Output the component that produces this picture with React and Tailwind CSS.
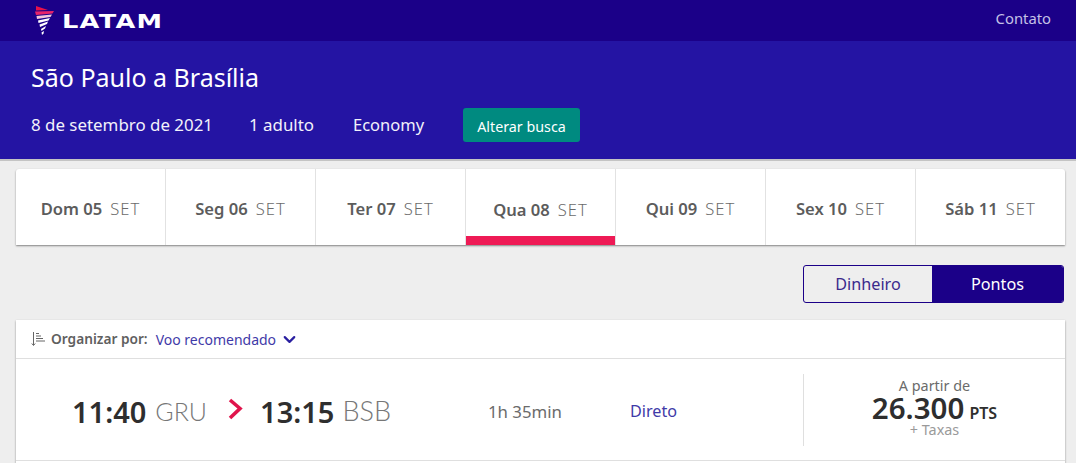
import React from "react";
import { ChevronDown } from "lucide-react";

const days = [
  { day: "Dom 05" },
  { day: "Seg 06" },
  { day: "Ter 07" },
  { day: "Qua 08", active: true },
  { day: "Qui 09" },
  { day: "Sex 10" },
  { day: "Sáb 11" },
];

const Logo = () => (
  <svg width="20" height="29" viewBox="0 0 20 29" className="shrink-0">
    <path d="M1 0 L13 4 L1 4.5 Z" fill="#e8114b" />
    <path d="M0 5.5 L19 5 L17.5 7.5 L1 9 Z" fill="#e8236a" />
    <path d="M1.5 10 L17 8.5 L15.5 11 L2 13 Z" fill="#f3c6dc" />
    <path d="M3 14.5 L15 12 L13.5 14.5 L3.5 17 Z" fill="#fff" />
    <path d="M4.5 18.5 L13 15.5 L12 18 L5 21 Z" fill="#fff" />
    <path d="M6 23 L11 20 L10 22.5 L6.5 25 Z" fill="#fff" />
    <path d="M6.5 26.5 L9 25 L8.5 27.5 L7 29 Z" fill="#fff" />
  </svg>
);

const SortIcon = () => (
  <svg width="15" height="16" viewBox="0 0 15 16" fill="none" stroke="#666" strokeWidth="1">
    <path d="M2.5 1 V14" />
    <path d="M0.8 12.5 L2.5 14.5 L4.2 12.5" />
    <path d="M5 2.5 H8 M5 5 H10 M5 7.5 H12 M5 10 H14" />
  </svg>
);

export default function App() {
  return (
    <div className="h-[463px] overflow-hidden bg-[#eeeeee] font-['Noto_Sans',sans-serif]">
      {/* Topo */}
      <div className="h-[41px] bg-[#1b0088] flex items-center justify-between pl-[35px] pr-[25px]">
        <div className="flex items-center gap-[7px]">
          <Logo />
          <span className="font-['DejaVu_Sans',sans-serif] font-bold text-[20px] leading-none tracking-[1px] text-white origin-left scale-x-[1.28]">
            LATAM
          </span>
        </div>
        <span className="text-[14.8px] text-[#c5c0e6] -mt-[5px]">Contato</span>
      </div>

      {/* Busca */}
      <div className="h-[118px] bg-[#2414a3] pl-[31px] pt-[19px]">
        <h1 className="text-[25px] leading-[34px] text-white">São Paulo a Brasília</h1>
        <div className="flex items-center mt-[14px] text-[16.9px] text-[#f2f1fa]">
          <span className="w-[218px]">8 de setembro de 2021</span>
          <span className="w-[104px]">1 adulto</span>
          <span className="w-[110px] text-[16.5px]">Economy</span>
          <button className="h-[34px] w-[117px] rounded-[3px] bg-[#008a80] text-[14.3px] text-white pt-[3px]">
            Alterar busca
          </button>
        </div>
      </div>
      <div className="h-[2px] bg-[#c4c4c4]" />

      <div className="pl-[16px] pt-[8px]">
        {/* Dias */}
        <div className="h-[76px] w-[1049px] flex bg-white rounded-t-[3px] shadow-[0_1px_2px_rgba(0,0,0,0.45)]">
          {days.map((d) => (
            <div
              key={d.day}
              className={`relative w-[150px] shrink-0 last:w-[149px] flex items-center justify-center gap-[8px] text-[#5c5c5c] border-r border-[#e2e2e2] last:border-r-0 ${
                d.active ? "pt-[6px]" : "pt-[4px]"
              }`}
            >
              <span className="font-semibold text-[16.6px]">{d.day}</span>
              <span className="text-[16.6px] font-light tracking-[1px] text-[#6b6b6b]">SET</span>
              {d.active && <div className="absolute left-0 right-0 bottom-0 h-[9px] bg-[#ee1a55]" />}
            </div>
          ))}
        </div>

        {/* Dinheiro / Pontos */}
        <div className="flex justify-end mt-[20px] w-[1048px]">
          <div className="flex h-[38px] w-[261px] rounded-[3px] border border-[#1b0088] text-[16.2px] overflow-hidden">
            <div className="w-[128px] flex items-center justify-center text-[#3a2a8c]">Dinheiro</div>
            <div className="flex-1 flex items-center justify-center bg-[#1b0088] text-white">Pontos</div>
          </div>
        </div>

        {/* Voos */}
        <div className="mt-[17px] w-[1049px] h-[200px] bg-white shadow-[0_1px_2px_rgba(0,0,0,0.4)]">
          <div className="h-[39px] flex items-center pl-[15px] border-b border-[#dfdfdf]">
            <SortIcon />
            <span className="ml-[5px] font-semibold text-[13.7px] text-[#5f5f5f]">Organizar por:</span>
            <span className="ml-[8px] text-[14px] text-[#3f3aa8]">Voo recomendado</span>
            <ChevronDown size={19} strokeWidth={2.75} className="ml-[4px] text-[#2a1fa0]" />
          </div>

          <div className="h-[102px] flex items-center border-b border-[#dfdfdf]">
            <div className="flex items-center w-[787px] pl-[56px] pt-[4px]">
              <div className="flex items-center w-[416px]">
                <span className="font-semibold text-[29px] text-[#2e2e2e]">11:40</span>
                <span className="ml-[9px] text-[25px] font-['Lato',sans-serif] font-light text-[#777]">GRU</span>
                <svg width="18" height="24" viewBox="0 0 18 24" fill="none" stroke="#e0144c" strokeWidth="3.6" className="ml-[20px] -mt-[6px]">
                  <path d="M3 3 L13 11.5 L3 21" />
                </svg>
                <span className="ml-[15px] font-semibold text-[29px] text-[#2e2e2e]">13:15</span>
                <span className="ml-[8px] text-[27px] font-['Lato',sans-serif] font-light text-[#777]">BSB</span>
              </div>
              <span className="w-[142px] text-[16.8px] text-[#6b6b6b]">1h 35min</span>
              <span className="text-[16.2px] text-[#3f3aa8]">Direto</span>
            </div>
            <div className="h-[72px] flex-1 border-l border-[#dfdfdf] flex flex-col items-center text-[#6b6b6b] pt-[2px]">
              <span className="text-[14.4px] leading-[20px]">A partir de</span>
              <div className="leading-[24px] text-[#2e2e2e] whitespace-nowrap">
                <span className="font-semibold text-[29.5px]">26.300</span>
                <span className="ml-[5px] font-semibold text-[16px]">PTS</span>
              </div>
              <span className="text-[14.4px] leading-[10px] text-[#9a9a9a]">+ Taxas</span>
            </div>
          </div>
        </div>
      </div>
    </div>
  );
}
